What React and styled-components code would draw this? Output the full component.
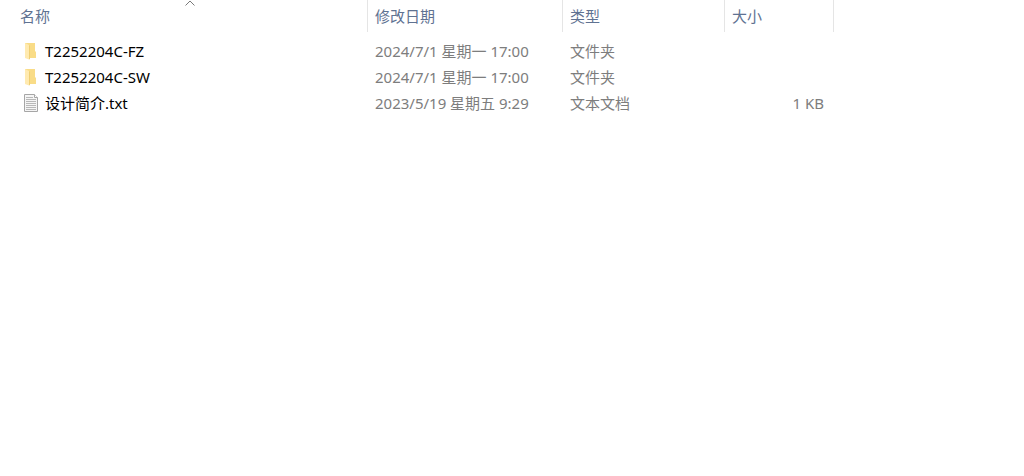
import styled, { createGlobalStyle } from 'styled-components'

const files = [
  { name: 'T2252204C-FZ', date: '2024/7/1 星期一 17:00', type: '文件夹', size: '', folder: true },
  { name: 'T2252204C-SW', date: '2024/7/1 星期一 17:00', type: '文件夹', size: '', folder: true },
  { name: '设计简介.txt', date: '2023/5/19 星期五 9:29', type: '文本文档', size: '1 KB', folder: false },
]

function FolderIcon() {
  return (
    <Icon viewBox="0 0 18 18" aria-hidden="true">
      <path d="M3 1h10v8l1 1v6H3z" fill="#f9dc87" />
      <path d="M3 1l4 2v14.500L3 16z" fill="#ffeab0" />
      <path d="M7 3v14.500l1-.5V4z" fill="#f0cf74" />
    </Icon>
  )
}

function TextIcon() {
  return (
    <Icon viewBox="0 0 18 18" aria-hidden="true">
      <path d="M2.500 .5h10l3 3v14h-13z" fill="#f5f5f5" stroke="#a6a6a6" />
      <path d="M12.500 .5v3h3" fill="#fff" stroke="#a6a6a6" />
      <path d="M4 3.500h7M4 5.500h10M4 7.500h10M4 9.500h10M4 11.500h10M4 13.500h10M4 15.500h10" stroke="#b8b8b8" />
    </Icon>
  )
}

function App() {
  return (
    <>
      <GlobalStyle />
      <Container>
        <FileTable>
          <colgroup>
            <Col $width={368} />
            <Col $width={195} />
            <Col $width={162} />
            <Col $width={109} />
            <col />
          </colgroup>
          <thead>
            <tr>
              <HeaderCell aria-sort="ascending" $first>
                <SortButton type="button">名称</SortButton>
                <SortArrow viewBox="0 0 10 6" aria-hidden="true">
                  <path d="M.5 5.500L5 1l4.500 4.500" fill="none" stroke="#7a7a7a" />
                </SortArrow>
              </HeaderCell>
              <HeaderCell><SortButton type="button">修改日期</SortButton></HeaderCell>
              <HeaderCell><SortButton type="button">类型</SortButton></HeaderCell>
              <HeaderCell><SortButton type="button">大小</SortButton></HeaderCell>
            </tr>
          </thead>
          <tbody>
            {files.map((file) => (
              <Row key={file.name}>
                <NameCell>
                  <FileName>
                    {file.folder ? <FolderIcon /> : <TextIcon />}
                    {file.name}
                  </FileName>
                </NameCell>
                <Cell>{file.date}</Cell>
                <Cell>{file.type}</Cell>
                <Cell $align="right">{file.size}</Cell>
              </Row>
            ))}
          </tbody>
        </FileTable>
      </Container>
    </>
  )
}

const GlobalStyle = createGlobalStyle`
  body {
    margin: 0;
    background: #fff;
    font-family: "Noto Sans", "Noto Sans CJK SC", sans-serif;
    font-size: 15px;
    line-height: 26px;
  }
`

const Container = styled.main`
  overflow-x: auto;
`

const FileTable = styled.table`
  width: 100%;
  table-layout: fixed;
  border-collapse: separate;
  border-spacing: 0;

  /* space between the header and the first row */
  thead::after {
    content: '';
    display: table-row;
    height: 6px;
  }
`

const Col = styled.col`
  width: ${({ $width }) => $width}px;
`

const HeaderCell = styled.th`
  position: relative;
  height: 32px;
  padding: 0 7px 0 ${({ $first }) => ($first ? 20 : 7)}px;
  border-right: 1px solid #e5e5e5;
  box-sizing: border-box;
  text-align: left;
  font-weight: 400;
`

const SortButton = styled.button`
  display: block;
  padding: 0;
  border: 0;
  background: none;
  color: #5f7292;
  font: inherit;
  cursor: pointer;
`

const SortArrow = styled.svg`
  position: absolute;
  top: 0;
  left: 185px;
  width: 10px;
  height: 6px;
`

const Row = styled.tr`
  height: 26px;
`

const Cell = styled.td`
  padding: 0 10px 0 7px;
  color: #7d7d7d;
  text-align: ${({ $align }) => $align || 'left'};
  white-space: nowrap;
`

const NameCell = styled(Cell)`
  padding-left: 22px;
  color: #000;
`

const FileName = styled.div`
  display: flex;
  align-items: center;
  gap: 5px;
`

const Icon = styled.svg`
  flex: none;
  width: 18px;
  height: 18px;
`

export default App
